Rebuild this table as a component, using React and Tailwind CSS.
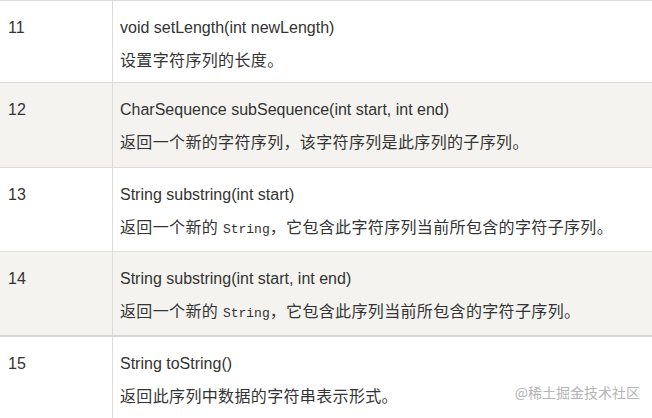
import React from "react";

const rows = [
  { n: "11", sig: "void setLength(int newLength)", desc: ["设置字符序列的长度。"], bg: "bg-white", h: "h-[82px]", border: "border-b border-[#dcdcdc]" },
  { n: "12", sig: "CharSequence subSequence(int start, int end)", desc: ["返回一个新的字符序列，该字符序列是此序列的子序列。"], bg: "bg-[#f4f3ef]", h: "h-[85px]", border: "border-b border-[#dcdcdc]" },
  { n: "13", sig: "String substring(int start)", desc: ["返回一个新的 ", "String", "，它包含此字符序列当前所包含的字符子序列。"], bg: "bg-white", h: "h-[84px]", border: "border-b border-[#dcdcdc]" },
  { n: "14", sig: "String substring(int start, int end)", desc: ["返回一个新的 ", "String", "，它包含此序列当前所包含的字符子序列。"], bg: "bg-[#f4f3ef]", h: "h-[85px]", border: "border-b-2 border-[#d6d6d6]" },
  { n: "15", sig: "String toString()", desc: ["返回此序列中数据的字符串表示形式。"], bg: "bg-white", h: "h-[84px]", border: "" },
];

export default function App() {
  return (
    <div className="relative w-[652px] h-[418px] overflow-hidden bg-white text-[#333333] font-['Liberation_Sans','Noto_Sans_CJK_SC',sans-serif]">
      <div className="border-t border-[#dcdcdc]">
        {rows.map((r) => (
          <div key={r.n} className={`flex ${r.bg} ${r.h} ${r.border}`}>
            <div className="w-[113px] shrink-0 border-r border-[#dcdcdc] pl-[8px] pt-[15px] text-[16px] leading-[24px]">
              {r.n}
            </div>
            <div className="flex-1 pl-[7px] pt-[15px]">
              <div className="text-[16px] leading-[24px] whitespace-nowrap">{r.sig}</div>
              <div className="mt-[9px] text-[16px] leading-[24px] tracking-[0.35px] whitespace-nowrap">
                {r.desc.length === 1 ? (
                  r.desc[0]
                ) : (
                  <>
                    {r.desc[0]}
                    <span className="font-['Liberation_Mono',monospace] text-[13px] tracking-normal">{r.desc[1]}</span>
                    {r.desc[2]}
                  </>
                )}
              </div>
            </div>
          </div>
        ))}
      </div>
      <div className="absolute right-[12px] bottom-[17px] text-[14px] leading-[18px] text-[#b4b4b4] font-['Noto_Sans_CJK_SC',sans-serif]">
        @稀土掘金技术社区
      </div>
    </div>
  );
}
